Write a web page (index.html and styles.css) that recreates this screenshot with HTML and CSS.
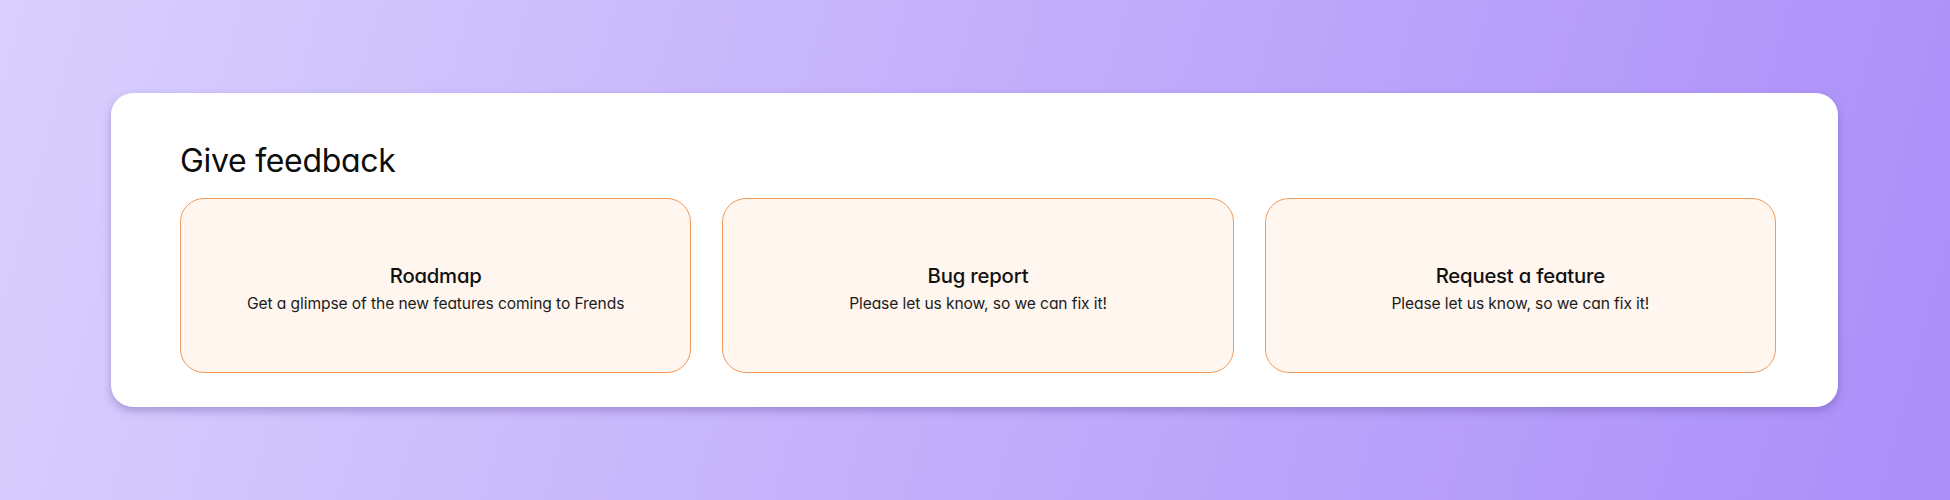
FILE: index.html
```html
<!DOCTYPE html>
<html lang="en">
<head>
<meta charset="utf-8">
<title>Give feedback</title>
<link rel="stylesheet" href="styles.css">
</head>
<body>
<main class="page">
  <section class="panel">
    <h1 class="panel-title">Give feedback</h1>
    <div class="cards">
      <a class="card" href="#">
        <span class="card-title">Roadmap</span>
        <span class="card-text">Get a glimpse of the new features coming to Frends</span>
      </a>
      <a class="card" href="#">
        <span class="card-title">Bug report</span>
        <span class="card-text">Please let us know, so we can fix it!</span>
      </a>
      <a class="card" href="#">
        <span class="card-title">Request a feature</span>
        <span class="card-text">Please let us know, so we can fix it!</span>
      </a>
    </div>
  </section>
</main>
</body>
</html>
```

FILE: styles.css
```css
* { box-sizing: border-box; }
html, body { margin: 0; padding: 0; }
body {
  width: 1950px;
  height: 500px;
  overflow: hidden;
  background: linear-gradient(105deg, #d9d0fd 0%, #c4b2fb 45%, #ab8ef9 100%);
  font-family: Inter, "Liberation Sans", sans-serif;
  font-feature-settings: "cv11", "ss01";
  color: #111;
}
.page {
  padding: 93px 112px 0 111px;
}
.panel {
  background: #fff;
  border-radius: 22px;
  box-shadow: 0 4px 8px rgba(90, 60, 150, 0.35);
  padding: 46px 62px 33px 69px;
  height: 314px;
}
.panel-title {
  margin: 0 0 16px 0;
  font-size: 32px;
  line-height: 43px;
  font-weight: 400;
  letter-spacing: -0.3px;
  color: #0d0d0d;
}
.cards {
  display: grid;
  grid-template-columns: repeat(3, 1fr);
  gap: 31px;
}
.card {
  height: 175px;
  background: #fff6ef;
  border: 1px solid #f09a5c;
  border-radius: 24px;
  display: flex;
  flex-direction: column;
  align-items: center;
  justify-content: center;
  gap: 5px;
  text-decoration: none;
  color: #111;
  padding-top: 6px;
}
.card-title {
  font-size: 20.3px;
  line-height: 25px;
  font-weight: 500;
  letter-spacing: -0.2px;
}
.card-text {
  font-size: 15.6px;
  line-height: 21px;
  font-weight: 400;
  color: #1c1c1c;
  letter-spacing: -0.1px;
}
```
